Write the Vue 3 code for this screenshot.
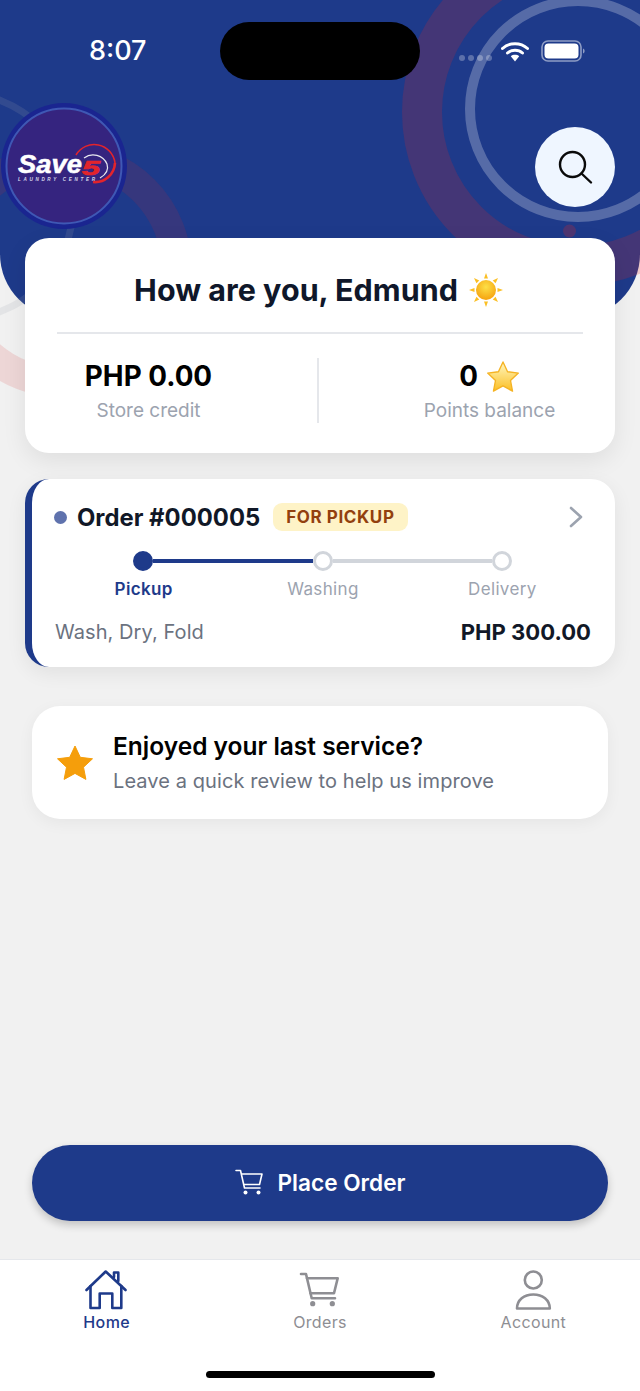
<script setup>
const steps = [
  { label: "Pickup", active: true },
  { label: "Washing", active: false },
  { label: "Delivery", active: false },
]
const sunRays = [0, 45, 90, 135, 180, 225, 270, 315]
</script>

<template>
  <div class="page">
    <div class="hero-bg"></div>
    <svg class="rings" viewBox="0 0 640 420" width="640" height="420" aria-hidden="true">
      <circle cx="576" cy="112" r="154" fill="none" stroke="#dc2626" stroke-opacity=".2" stroke-width="40" />
      <circle cx="578" cy="109" r="108" fill="none" stroke="#fff" stroke-opacity=".25" stroke-width="10" />
      <circle cx="569.5" cy="231" r="6.5" fill="#dc2626" fill-opacity=".25" />
      <circle cx="64" cy="270" r="113" fill="none" stroke="#dc2626" stroke-opacity=".13" stroke-width="30" />
      <circle cx="-40" cy="206" r="113" fill="none" stroke="#9ca3af" stroke-opacity=".16" stroke-width="7" />
    </svg>

    <header class="hero">
      <div class="status">
        <div class="status-left">8:07</div>
        <div class="island"></div>
        <div class="status-right">
          <div class="cell-dots"><i></i><i></i><i></i><i></i></div>
          <svg class="wifi" width="28" height="21" viewBox="0 0 28 21">
            <path d="M1.5 7.5C8.5 1 19.5 1 26.5 7.5" fill="none" stroke="#fff" stroke-width="3" stroke-linecap="round" />
            <path d="M6.5 12C10.5 8.4 17.5 8.4 21.5 12" fill="none" stroke="#fff" stroke-width="3" stroke-linecap="round" />
            <path d="M9.8 15.2C12 13.4 16 13.4 18.2 15.2L14 20.5Z" fill="#fff" />
          </svg>
          <svg class="battery" width="44" height="22" viewBox="0 0 44 22">
            <rect x="1" y="1" width="39" height="20" rx="6" fill="none" stroke="#fff" stroke-opacity=".5" stroke-width="1.6" />
            <rect x="3.5" y="3.5" width="34" height="15" rx="4" fill="#fff" />
            <path d="M42 8.5c1.2.4 1.6 1.4 1.6 2.5s-.4 2.1-1.6 2.5z" fill="#fff" fill-opacity=".5" />
          </svg>
        </div>
      </div>

      <div class="hero-row">
        <svg class="logo" width="126" height="126" viewBox="1 103 126 126">
          <circle cx="64" cy="166" r="63" fill="#1a2590" />
          <circle cx="64" cy="166" r="57.5" fill="#35247f" stroke="#3f58b4" stroke-width="2" />
          <path d="M76 155A21 21 0 0 1 115 163" fill="none" stroke="#e2242c" stroke-width="1.6" />
          <path d="M115 163A20 20 0 0 1 93 182" fill="none" stroke="#e2242c" stroke-width="2.6" />
          <path d="M84 158A15 15 0 0 1 107 164C109 170 105 175 100 178" fill="none" stroke="#e8e8f0" stroke-width="1.2" />
          <text x="18" y="173" textLength="64" lengthAdjust="spacingAndGlyphs" class="logo-save">Save</text>
          <text x="82" y="174.5" textLength="18" lengthAdjust="spacingAndGlyphs" class="logo-five">5</text>
          <text x="18" y="180.5" textLength="77" class="logo-sub">LAUNDRY CENTER</text>
        </svg>
        <button class="search">
          <svg width="36" height="36" viewBox="0 0 36 36">
            <circle cx="15.5" cy="15.5" r="12.5" fill="none" stroke="#0a0a0a" stroke-width="2.4" />
            <path d="M24.5 24.5L34 33.5" fill="none" stroke="#0a0a0a" stroke-width="2.4" stroke-linecap="round" />
          </svg>
        </button>
      </div>
    </header>

    <main class="content">
      <section class="card welcome">
        <h1 class="greeting">
          How are you, Edmund
          <svg class="sun" width="34" height="34" viewBox="0 0 34 34">
            <defs>
              <radialGradient id="sunFill" cx=".5" cy=".35" r=".7">
                <stop offset="0" stop-color="#fde047" />
                <stop offset="1" stop-color="#f59e0b" />
              </radialGradient>
            </defs>
            <path v-for="r in sunRays" :key="r" d="M15 5.5L17 0L19 5.5Z" fill="#fbbf24" :transform="`rotate(${r} 17 17)`" />
            <circle cx="17" cy="17" r="10" fill="url(#sunFill)" />
          </svg>
        </h1>
        <div class="stats">
          <div class="stat">
            <div class="stat-value">PHP 0.00</div>
            <div class="stat-label">Store credit</div>
          </div>
          <div class="stat-divider"></div>
          <div class="stat">
            <div class="stat-value points">
              0
              <svg width="34" height="33" viewBox="0 0 35 33">
                <defs>
                  <linearGradient id="starFill" x1="0" y1="0" x2="0" y2="1">
                    <stop offset="0" stop-color="#fff7c2" />
                    <stop offset="1" stop-color="#fbbf24" />
                  </linearGradient>
                </defs>
                <path d="M17.5 1.5L22.2 11.6L33.3 13L25.2 20.6L27.3 31.5L17.5 26.2L7.7 31.5L9.8 20.6L1.7 13L12.8 11.6Z" fill="url(#starFill)" stroke="#f5b324" stroke-width="1.4" stroke-linejoin="round" />
              </svg>
            </div>
            <div class="stat-label">Points balance</div>
          </div>
        </div>
      </section>

      <section class="card order">
        <div class="order-head">
          <span class="order-dot"></span>
          <span class="order-title">Order #000005</span>
          <span class="badge">FOR PICKUP</span>
          <svg class="chevron" width="14" height="22" viewBox="0 0 14 22">
            <path d="M2 2L12 11L2 20" fill="none" stroke="#9ca3af" stroke-width="2.6" stroke-linecap="round" stroke-linejoin="round" />
          </svg>
        </div>
        <div class="track">
          <span class="node done"></span>
          <span class="line done"></span>
          <span class="node"></span>
          <span class="line"></span>
          <span class="node"></span>
        </div>
        <div class="step-labels">
          <span v-for="s in steps" :key="s.label" :class="{ on: s.active }">{{ s.label }}</span>
        </div>
        <div class="order-foot">
          <span class="service">Wash, Dry, Fold</span>
          <span class="price">PHP 300.00</span>
        </div>
      </section>

      <section class="card review">
        <svg width="36" height="36" viewBox="0 0 36 36">
          <path d="M18 1L23.3 12.3L35.5 13.8L26.5 22.2L28.9 34.4L18 28.4L7.1 34.4L9.5 22.2L.5 13.8L12.7 12.3Z" fill="#f59e0b" stroke="#f59e0b" stroke-linejoin="round" />
        </svg>
        <div>
          <div class="review-title">Enjoyed your last service?</div>
          <div class="review-sub">Leave a quick review to help us improve</div>
        </div>
      </section>

      <button class="place">
        <svg width="28" height="26" viewBox="0 0 28 26">
          <path d="M1 1.5H5.5L9.5 19H25" fill="none" stroke="#fff" stroke-width="1.6" stroke-linecap="round" stroke-linejoin="round" />
          <path d="M6.3 5H27L24.5 15.5H8.7" fill="none" stroke="#fff" stroke-width="1.6" stroke-linejoin="round" />
          <circle cx="10.5" cy="23.5" r="2" fill="#fff" />
          <circle cx="23.5" cy="23.5" r="2" fill="#fff" />
        </svg>
        Place Order
      </button>
    </main>

    <nav class="tabs">
      <div class="tab-row">
        <div class="tab on">
          <svg width="44" height="44" viewBox="1 0 44 44">
            <g fill="none" stroke="#1e3a8a" stroke-width="2.6" stroke-linecap="round" stroke-linejoin="round">
              <path d="M2.5 22L21.7 3.5L41.5 22" />
              <path d="M6.5 18V40H15.7V25.5H28.3V40H37.3V18" />
              <path d="M30 9V4.5H34.3V13" />
            </g>
          </svg>
          <span>Home</span>
        </div>
        <div class="tab">
          <svg width="44" height="44" viewBox="0 -2 44 44">
            <g fill="none" stroke="#8e8e93" stroke-width="2.6" stroke-linecap="round" stroke-linejoin="round">
              <path d="M3 4H8L13.7 28.3H37" />
              <path d="M9 8.3H39.7L36 23.3H12.5" />
            </g>
            <circle cx="14.7" cy="33.7" r="2.6" fill="#8e8e93" />
            <circle cx="34.3" cy="33.7" r="2.6" fill="#8e8e93" />
          </svg>
          <span>Orders</span>
        </div>
        <div class="tab">
          <svg width="44" height="44" viewBox="-1 -2 44 44">
            <g fill="none" stroke="#8e8e93" stroke-width="2.6" stroke-linejoin="round">
              <circle cx="21.3" cy="10" r="8.5" />
              <path d="M5 38.5C5 30 12 24.5 21.3 24.5C30.6 24.5 37.8 30 37.8 38.5Z" />
            </g>
          </svg>
          <span>Account</span>
        </div>
      </div>
      <div class="home-bar"></div>
    </nav>
  </div>
</template>

<style>
body {
  background: #f1f1f1;
}
</style>

<style scoped>
.page {
  position: relative;
  width: 640px;
  height: 1391px;
  overflow: hidden;
  display: flex;
  flex-direction: column;
  background: #f1f1f1;
  font-family: Inter, "Liberation Sans", sans-serif;
  color: #111827;
}

.hero-bg {
  position: absolute;
  top: 0;
  left: 0;
  width: 640px;
  height: 318px;
  background: #1e3a8a;
  border-radius: 0 0 64px 64px;
}

.rings {
  position: absolute;
  top: 0;
  left: 0;
}

.hero {
  position: relative;
  height: 238px;
  flex: none;
}

.status {
  display: flex;
  height: 103px;
  padding-top: 22px;
  box-sizing: border-box;
}

.status-left {
  width: 220px;
  box-sizing: border-box;
  padding-left: 89px;
  height: 58px;
  line-height: 58px;
  color: #fff;
  font-size: 27px;
  font-weight: 500;
}

.island {
  width: 200px;
  height: 58px;
  border-radius: 29px;
  background: #000;
}

.status-right {
  display: flex;
  align-items: center;
  height: 58px;
  padding-left: 39px;
}

.cell-dots {
  display: flex;
  gap: 3px;
  margin-top: 14px;
  margin-right: 9px;
}

.cell-dots i {
  width: 6px;
  height: 6px;
  border-radius: 50%;
  background: rgba(255, 255, 255, 0.28);
}

.wifi {
  margin-right: 12px;
}

.hero-row {
  display: flex;
  justify-content: space-between;
  align-items: flex-start;
  padding: 0 25px 0 1px;
}

.logo {
  display: block;
}

.logo-save {
  font: italic 700 25px "Liberation Sans", sans-serif;
  fill: #fff;
  stroke: #fff;
  stroke-width: 0.5px;
}

.logo-five {
  font: italic 700 21px "Liberation Sans", sans-serif;
  fill: #e2242c;
  stroke: #e2242c;
  stroke-width: 0.7px;
}

.logo-sub {
  font: italic 700 4.6px "Liberation Sans", sans-serif;
  fill: #d8d8ea;
}

.search {
  width: 80px;
  height: 80px;
  margin-top: 24px;
  padding: 0;
  border: none;
  border-radius: 50%;
  background: #eff6ff;
  display: flex;
  align-items: center;
  justify-content: center;
}

.content {
  position: relative;
  flex: 1;
  display: flex;
  flex-direction: column;
}

.card {
  background: #fff;
  box-sizing: border-box;
}

.welcome {
  margin: 0 25px;
  height: 215px;
  padding-top: 30px;
  border-radius: 24px;
  box-shadow: 0 8px 24px rgba(0, 0, 0, 0.08);
}

.greeting {
  margin: 0 32px;
  height: 64px;
  padding-right: 3px;
  box-sizing: content-box;
  border-bottom: 2px solid #e5e7eb;
  display: flex;
  justify-content: center;
  gap: 11px;
  font-size: 30.5px;
  line-height: 44px;
  font-weight: 700;
  color: #0f172a;
}

.sun {
  margin-top: 5px;
}

.stats {
  margin: 24px 32px 0;
  display: grid;
  grid-template-columns: 183px 1fr 187px;
}

.stat {
  text-align: center;
}

.stat-value {
  height: 36px;
  line-height: 36px;
  font-size: 27.8px;
  font-weight: 700;
  color: #000;
}

.points {
  display: flex;
  justify-content: center;
  align-items: center;
  gap: 8px;
}

.stat-label {
  margin-top: 5px;
  line-height: 24px;
  font-size: 19px;
  color: #9ca3af;
}

.stat-divider {
  justify-self: center;
  width: 2px;
  height: 65px;
  background: #e5e7eb;
}

.order {
  margin: 26px 25px 0;
  height: 188px;
  padding: 20px 23px 21px 22px;
  border-left: 7px solid #1e3a8a;
  border-radius: 24px;
  box-shadow: 0 6px 20px rgba(0, 0, 0, 0.07);
}

.order-head {
  display: flex;
  align-items: center;
  height: 36px;
}

.order-dot {
  width: 13px;
  height: 13px;
  border-radius: 50%;
  background: #5f72ad;
  margin-right: 10px;
}

.order-title {
  font-size: 23.85px;
  font-weight: 700;
  color: #111827;
}

.badge {
  margin-left: 13px;
  height: 28px;
  line-height: 28px;
  padding: 0 13px;
  border-radius: 9px;
  background: #fef3c7;
  color: #92400e;
  font-size: 17px;
  font-weight: 700;
  letter-spacing: 0.6px;
}

.chevron {
  margin-left: auto;
  margin-right: 9px;
}

.track {
  display: flex;
  align-items: center;
  margin-top: 16px;
  padding: 0 80px 0 79px;
  height: 20px;
}

.node {
  flex: none;
  width: 20px;
  height: 20px;
  box-sizing: border-box;
  border-radius: 50%;
  border: 3px solid #d1d5db;
  background: #fff;
}

.node.done {
  border-color: #1e3a8a;
  background: #1e3a8a;
}

.line {
  flex: 1;
  height: 4px;
  background: #d1d5db;
}

.line.done {
  background: #1e3a8a;
}

.step-labels {
  display: grid;
  grid-template-columns: repeat(3, 1fr);
  margin-top: 7px;
  text-align: center;
  line-height: 22px;
  font-size: 17px;
  letter-spacing: 0.35px;
  color: #9ca3af;
}

.step-labels .on {
  color: #1e3a8a;
  font-weight: 600;
}

.order-foot {
  display: flex;
  justify-content: space-between;
  margin-top: 18px;
  line-height: 28px;
}

.service {
  padding-left: 1px;
  font-size: 20px;
  letter-spacing: 0.07px;
  color: #6b7280;
}

.price {
  padding-right: 1px;
  font-size: 22.1px;
  font-weight: 700;
  color: #111827;
}

.review {
  margin: 39px 32px 0;
  height: 113px;
  padding-left: 25px;
  display: flex;
  align-items: center;
  gap: 20px;
  border-radius: 28px;
  box-shadow: 0 4px 16px rgba(0, 0, 0, 0.05);
}

.review-title {
  line-height: 33px;
  font-size: 24.5px;
  font-weight: 600;
  color: #000;
}

.review-sub {
  margin-top: 3px;
  line-height: 30px;
  font-size: 20px;
  letter-spacing: 0.08px;
  color: #6b7280;
}

.place {
  margin: auto 32px 38px;
  height: 76px;
  padding: 0 0 2px;
  border: none;
  border-radius: 38px;
  background: #1e3a8a;
  color: #fff;
  display: flex;
  align-items: center;
  justify-content: center;
  gap: 15px;
  font-family: inherit;
  font-size: 22.6px;
  font-weight: 600;
  box-shadow: 0 4px 8px rgba(0, 0, 0, 0.2);
}

.tabs {
  position: relative;
  flex: none;
  height: 132px;
  box-sizing: border-box;
  background: #fff;
  border-top: 1px solid #e5e7eb;
  padding-top: 8px;
}

.tab-row {
  display: grid;
  grid-template-columns: repeat(3, 1fr);
}

.tab {
  display: flex;
  flex-direction: column;
  align-items: center;
  font-size: 16px;
  line-height: 20px;
  font-weight: 400;
  letter-spacing: 0.35px;
  color: #8e8e93;
}

.tab svg {
  display: block;
}

.tab.on {
  color: #1e3a8a;
  font-weight: 500;
}

.home-bar {
  width: 229px;
  height: 7px;
  margin: 39px auto 0;
  border-radius: 4px;
  background: #000;
}
</style>
